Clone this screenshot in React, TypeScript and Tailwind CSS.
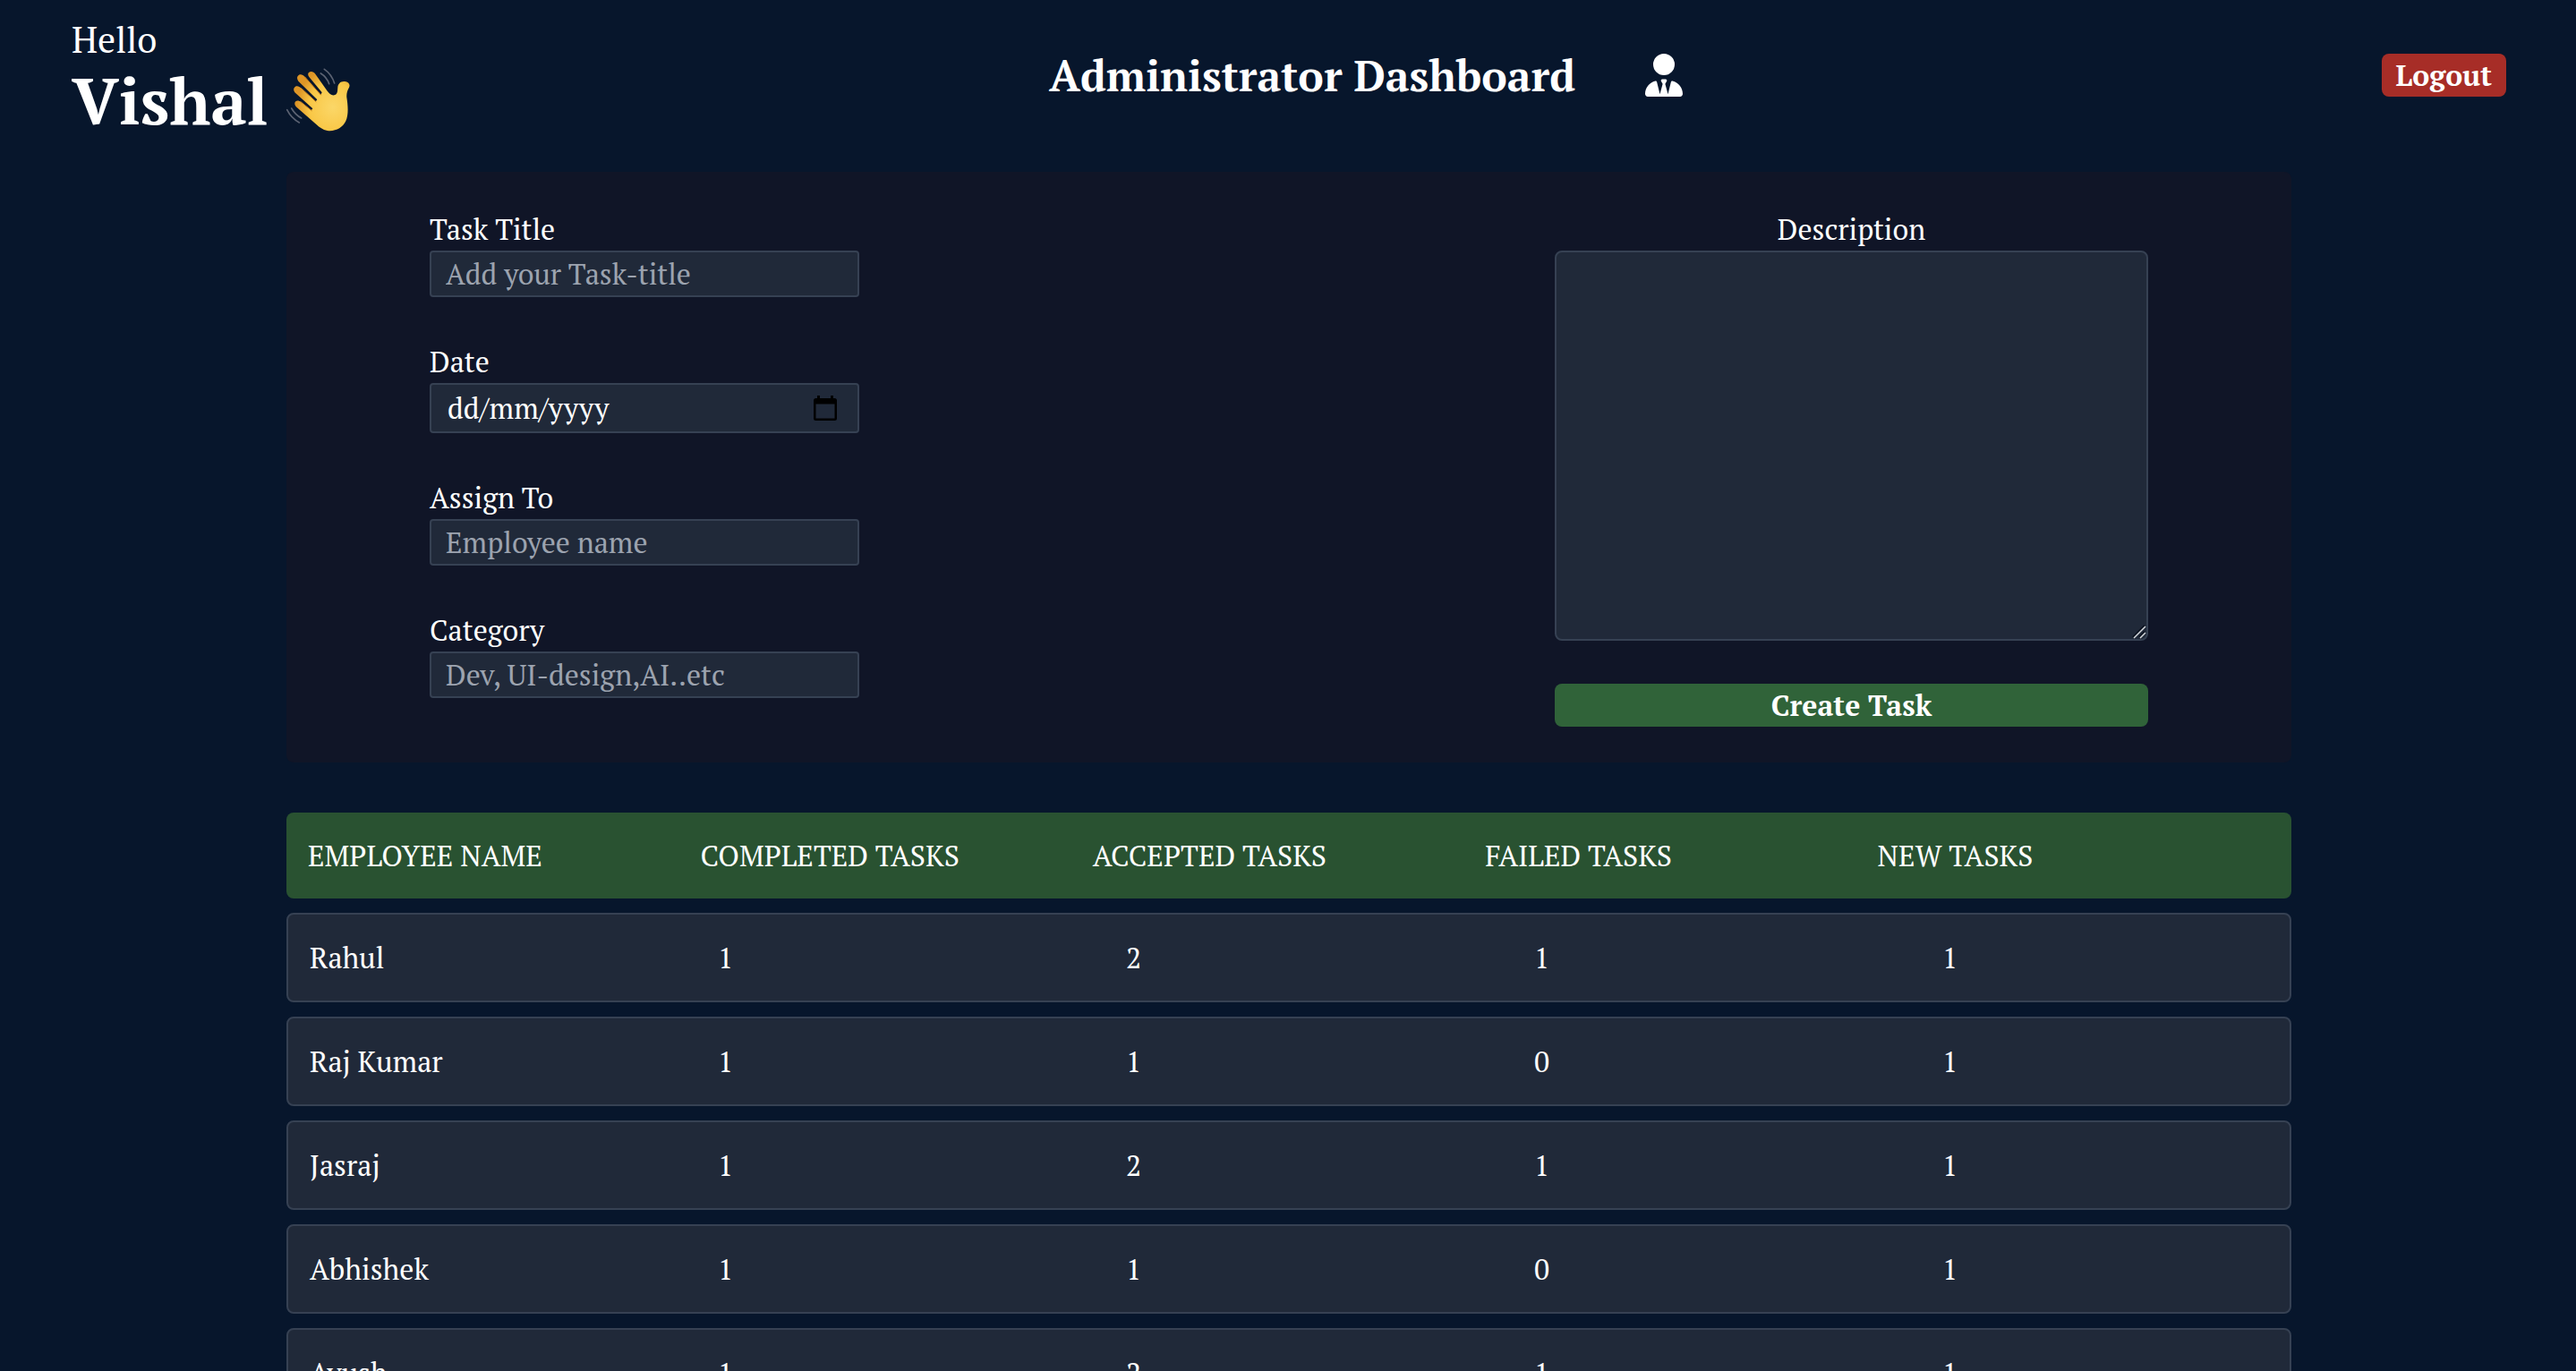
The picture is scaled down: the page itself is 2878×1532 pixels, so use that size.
import { FaUserTie } from "react-icons/fa6";

type Employee = { name: string; counts: number[] };

const columns = ["EMPLOYEE NAME", "COMPLETED TASKS", "ACCEPTED TASKS", "FAILED TASKS", "NEW TASKS"];

const employees: Employee[] = [
  { name: "Rahul", counts: [1, 2, 1, 1] },
  { name: "Raj Kumar", counts: [1, 1, 0, 1] },
  { name: "Jasraj", counts: [1, 2, 1, 1] },
  { name: "Abhishek", counts: [1, 1, 0, 1] },
  { name: "Ayush", counts: [1, 2, 1, 1] },
];

function WavingHand() {
  return (
    <svg viewBox="0 0 216 216" className="size-[72px]" role="img" aria-label="Waving hand">
      <defs>
        <radialGradient id="palm" cx="0.7" cy="0.6" r="0.65">
          <stop offset="0" stopColor="#fbd768" />
          <stop offset="0.65" stopColor="#f9c746" />
          <stop offset="1" stopColor="#dd9526" />
        </radialGradient>
      </defs>
      <path
        d="M78 15 C85 9 94 12 100 20 L139 76 C147 87 156 94 166 90 C175 86 174 76 175 65 C176 52 185 43 199 45 C211 47 218 55 213 65 C207 76 204 85 205 98 C209 124 212 156 202 178 C192 200 166 214 140 210 C124 207 114 199 104 190 L37 131 C30 124 29 117 34 112 C39 108 46 110 52 114 L86 142 L91 136 L31 82 C25 74 27 66 33 62 C40 59 47 62 53 68 L101 112 L106 106 L43 44 C37 36 38 27 45 23 C52 20 59 23 65 30 L118 89 L122 82 L79 30 C75 24 74 19 78 15 Z"
        fill="url(#palm)"
      />
      <path
        d="M52 114 L88 143 M53 68 L102 113 M65 30 L118 90"
        fill="none"
        stroke="#c87f1d"
        strokeWidth="3"
        strokeLinecap="round"
      />
      <path
        d="M130 4 Q154 20 164 51 M118 18 Q138 30 146 53 M5 140 Q19 168 46 183 M20 135 Q32 156 53 168"
        fill="none"
        stroke="#5b6272"
        strokeWidth="5"
        strokeLinecap="round"
      />
    </svg>
  );
}

function CalendarIcon() {
  return (
    <svg viewBox="0 0 26 28" className="h-7 w-[26px]" aria-hidden="true">
      <path
        fill="#000"
        fillRule="evenodd"
        d="M4 0h3v3h12V0h3v3h1.500a2.500 2.500 0 0 1 2.500 2.500v20a2.500 2.500 0 0 1-2.500 2.500h-21A2.500 2.500 0 0 1 0 25.500v-20A2.500 2.500 0 0 1 2.500 3H4zM2.500 9.500v16h21v-16z"
      />
    </svg>
  );
}

const inputClass =
  "h-[52px] w-full rounded-sm border-2 border-gray-700 bg-[#202939] px-4 text-white placeholder:text-[#9ca3af] outline-none";

function Field({ id, label, placeholder }: { id: string; label: string; placeholder: string }) {
  return (
    <div>
      <label htmlFor={id} className="block">
        {label}
      </label>
      <input id={id} type="text" placeholder={placeholder} className={inputClass} />
    </div>
  );
}

function DateField() {
  return (
    <div>
      <label htmlFor="date" className="block">
        Date
      </label>
      <div className="flex h-14 items-center rounded-sm border-2 border-gray-700 bg-[#202939] pr-[23px] pl-[18px]">
        <input
          id="date"
          type="text"
          placeholder="dd/mm/yyyy"
          className="min-w-0 flex-1 bg-transparent text-white outline-none placeholder:text-white"
        />
        <button type="button" aria-label="Open calendar">
          <CalendarIcon />
        </button>
      </div>
    </div>
  );
}

function Header() {
  return (
    <header className="flex items-center justify-between pt-4 pr-[78px] pb-4 pl-20">
      <div>
        <p className="text-[40px] leading-14">Hello</p>
        <div className="flex items-center gap-5">
          <span className="text-7xl leading-20 font-bold">Vishal</span>
          <WavingHand />
        </div>
      </div>
      <div className="flex items-center gap-[78px]">
        <h1 className="text-5xl leading-16 font-bold">Administrator Dashboard</h1>
        <FaUserTie className="h-12 w-[42px]" aria-hidden="true" />
      </div>
      <button type="button" className="rounded-lg bg-[#a72d27] px-4 font-bold">
        Logout
      </button>
    </header>
  );
}

function TaskForm() {
  return (
    <form className="flex items-start justify-between rounded-lg bg-[#101527] px-40 py-10">
      <div className="flex w-[480px] flex-col gap-12">
        <Field id="title" label="Task Title" placeholder="Add your Task-title" />
        <DateField />
        <Field id="assignee" label="Assign To" placeholder="Employee name" />
        <Field id="category" label="Category" placeholder="Dev, UI-design,AI..etc" />
      </div>
      <div className="flex w-[663px] flex-col">
        <label htmlFor="description" className="text-center">
          Description
        </label>
        <div className="relative flex">
          <textarea
            id="description"
            className="h-[436px] w-full resize-none rounded-lg border-2 border-gray-700 bg-[#202939] px-4 outline-none"
          />
          <svg viewBox="0 0 16 16" className="absolute right-0.5 bottom-0.5 size-4" aria-hidden="true">
            <path d="M1 14 L14 1 M8 14 L14 8" stroke="#0b1220" strokeWidth="2" />
            <path d="M2 15 L15 2 M9 15 L15 9" stroke="#d5d8dd" strokeWidth="1.500" />
          </svg>
        </div>
        <button type="submit" className="mt-12 rounded-lg bg-[#306339] font-bold">
          Create Task
        </button>
      </div>
    </form>
  );
}

function EmployeeTable() {
  return (
    <table className="mt-14 block">
      <thead className="block">
        <tr className="grid grid-cols-5 rounded-lg bg-[#295231] p-6">
          {columns.map((column) => (
            <th key={column} scope="col" className="text-left font-normal">
              {column}
            </th>
          ))}
        </tr>
      </thead>
      <tbody className="mt-4 flex flex-col gap-4">
        {employees.map((employee) => (
          <tr
            key={employee.name}
            className="grid grid-cols-[456fr_456fr_456fr_456fr_364fr] rounded-lg border-2 border-gray-700 bg-[#202939] p-6"
          >
            <th scope="row" className="text-left font-normal">
              {employee.name}
            </th>
            {employee.counts.map((count, index) => (
              <td key={columns[index + 1]}>{count}</td>
            ))}
          </tr>
        ))}
      </tbody>
    </table>
  );
}

export default function App() {
  return (
    <div className="h-screen overflow-hidden bg-[#07162c] font-['PT_Serif','Liberation_Serif',serif] text-[32px] leading-12 text-white">
      <Header />
      <main className="pt-6 pr-[318px] pl-80">
        <TaskForm />
        <EmployeeTable />
      </main>
    </div>
  );
}
